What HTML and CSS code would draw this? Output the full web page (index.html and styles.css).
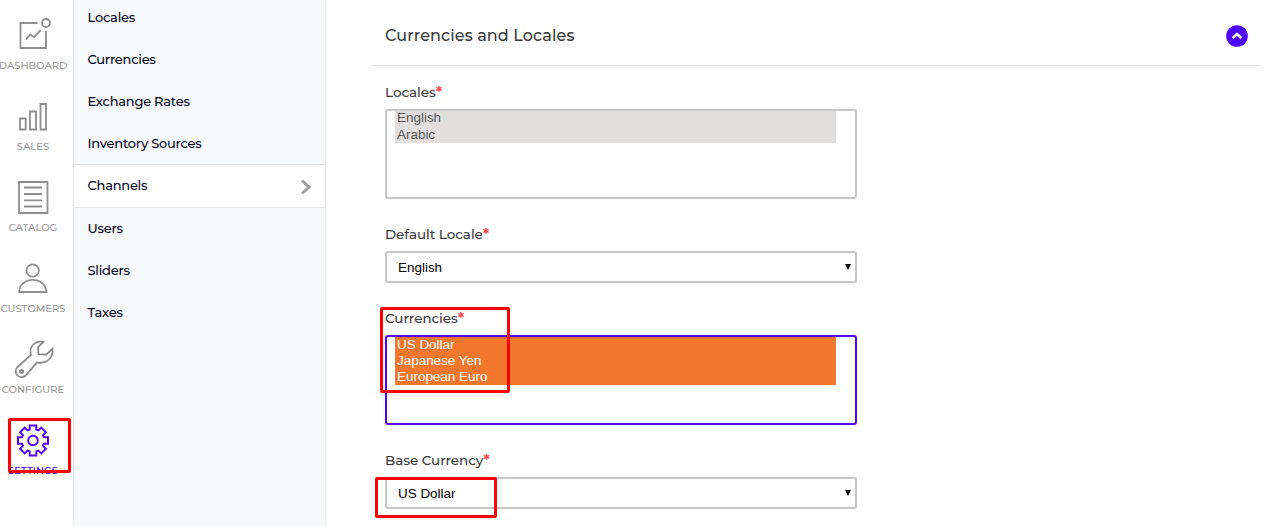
FILE: index.html
```
<!DOCTYPE html>
<html lang="en">
<head>
<meta charset="utf-8">
<title>Channels</title>
<link rel="stylesheet" href="styles.css">
</head>
<body>
<div class="app">
  <nav class="rail">
    <a class="rail-item"><svg class="icon" viewBox="0 0 40 40"><path d="M24.500 8H7.500V33H33V16M13 24.500l4.200-5 4 2.600 6.300-7"/><circle cx="33" cy="8" r="4"/></svg><span class="rail-label">DASHBOARD</span></a>
    <a class="rail-item"><svg class="icon" viewBox="0 0 40 40"><path d="M7 22.500h5.700v11H7zM17 15.500h6v18h-6zM27.500 8H33v25.500h-5.500z"/></svg><span class="rail-label">SALES</span></a>
    <a class="rail-item"><svg class="icon" viewBox="0 0 40 40"><path d="M6 5h28.500v31H6zM11 10.500h18M11 17h18M11 23.300h18M11 29.500h18"/></svg><span class="rail-label">CATALOG</span></a>
    <a class="rail-item"><svg class="icon" viewBox="0 0 40 40"><circle cx="19.700" cy="12.500" r="6.200"/><path d="M6.200 34C6.500 26.500 12 21.800 19.700 21.800S33 26.500 33.300 34z"/></svg><span class="rail-label">CUSTOMERS</span></a>
    <a class="rail-item"><svg class="icon" viewBox="0 0 40 40"><path d="M30.500 3C22 1 15.500 8 18 16L4.500 28a5.700 5.700 0 1 0 8.300 8.500L24 23.300C33 25.500 40.500 19 39.500 9.700L33.500 15.500 25.500 15.200 25 8z"/><circle cx="8.500" cy="32.500" r="1.700"/></svg><span class="rail-label">CONFIGURE</span></a>
    <a class="rail-item active"><svg class="icon" viewBox="-20 -20.500 40 40"><path d="M-3.300-11V-15H3.300V-11L5.400-10.100 8.300-12.900 12.900-8.300 10.100-5.400 11-3.300H15V3.300H11L10.100 5.400 12.900 8.300 8.300 12.900 5.400 10.100 3.300 11V15H-3.300V11L-5.400 10.100-8.300 12.900-12.900 8.300-10.100 5.400-11 3.300H-15V-3.300H-11L-10.100-5.400-12.900-8.300-8.300-12.900-5.400-10.100z"/><circle r="4.800"/></svg><span class="rail-label">SETTINGS</span></a>
  </nav>
  <aside class="menu">
    <a class="menu-item">Locales</a>
    <a class="menu-item">Currencies</a>
    <a class="menu-item">Exchange Rates</a>
    <a class="menu-item">Inventory Sources</a>
    <a class="menu-item current">Channels<svg class="chevron" viewBox="0 0 12 16"><path d="M2 1.500L9 8 2 14.500"/></svg></a>
    <a class="menu-item">Users</a>
    <a class="menu-item">Sliders</a>
    <a class="menu-item">Taxes</a>
  </aside>
  <main class="content">
    <header class="section-head">
      <h1 class="section-title">Currencies and Locales</h1>
      <svg class="collapse" viewBox="0 0 22 22"><circle cx="11" cy="11" r="10.800"/><path d="M7.300 12.500L11 9l3.700 3.500"/></svg>
    </header>
    <form class="fields">
      <div class="field">
        <label class="label">Locales<span class="required">*</span></label>
        <div class="listbox disabled"><div class="option">English</div><div class="option">Arabic</div></div>
      </div>
      <div class="field">
        <label class="label">Default Locale<span class="required">*</span></label>
        <div class="select">English<svg class="arrow" viewBox="0 0 6 6"><path d="M0 0h6L3 6z"/></svg></div>
      </div>
      <div class="field">
        <label class="label">Currencies<span class="required">*</span></label>
        <div class="listbox focused"><div class="option">US Dollar</div><div class="option">Japanese Yen</div><div class="option">European Euro</div></div>
      </div>
      <div class="field">
        <label class="label">Base Currency<span class="required">*</span></label>
        <div class="select">US Dollar<svg class="arrow" viewBox="0 0 6 6"><path d="M0 0h6L3 6z"/></svg></div>
      </div>
    </form>
  </main>
  <div class="marker marker-settings"></div>
  <div class="marker marker-currencies"></div>
  <div class="marker marker-base"></div>
</div>
</body>
</html>
```
FILE: styles.css
```
* { box-sizing: border-box; }
body { margin: 0; background: #fff; font-family: Montserrat, Inter, sans-serif; }
.app { position: relative; display: flex; width: 1266px; height: 526px; overflow: hidden; }

.rail { display: flex; flex-direction: column; gap: 21px; width: 74px; padding: 15px 7px 0 0; border-right: 1px solid #e8e8e8; flex-shrink: 0; }
.rail-item { display: flex; flex-direction: column; align-items: center; flex-shrink: 0; height: 60px; color: #979797; }
.icon { width: 40px; height: 40px; flex-shrink: 0; overflow: visible; fill: none; stroke: #8e8e8e; stroke-width: 1.8; }
.rail-label { padding-top: 1px; font-size: 10px; line-height: 20px; white-space: nowrap; font-weight: 500; }
.rail-item.active { color: #5500f5; }
.active .icon { stroke: #5500f5; stroke-width: 2; }

.menu { width: 252px; flex-shrink: 0; background: #f8f9fb; border-right: 1px solid #e8e8e8; margin-top: -4px; height: 530px; }
.menu-item { display: flex; justify-content: space-between; align-items: center; height: 42px; padding: 0 13px 0 13.5px; color: #070720; font-size: 13px; font-weight: 500; letter-spacing: -0.24px; }
.menu-item.current { height: 44px; margin-bottom: -1px; padding-bottom: 2px; background: #fff; border-top: 1px solid #e8e8e8; border-bottom: 1px solid #e8e8e8; }
.chevron { width: 12px; height: 16px; margin-top: 4px; fill: none; stroke: #a0a0a0; stroke-width: 3; }

.content { width: 890px; margin-left: 45px; flex-shrink: 0; }
.section-head { display: flex; align-items: center; justify-content: space-between; height: 66px; padding: 6px 13px 0 14px; border-bottom: 1px solid #e4e4e4; }
.section-title { margin: 0; color: #3a3a3a; font-size: 16px; line-height: 24px; font-weight: 500; letter-spacing: 0.1px; }
.collapse { width: 22px; height: 22px; fill: #4f00ff; }
.collapse path { fill: none; stroke: #fff; stroke-width: 2.5; stroke-linecap: round; }
.fields { display: flex; flex-direction: column; gap: 23px; padding: 14px 14px 0; }
.field { display: flex; flex-direction: column; gap: 5px; width: 472px; }
.label { height: 24px; color: #3a3a3a; font-size: 13.5px; line-height: 24px; font-weight: 500; letter-spacing: -0.05px; }
.required { color: #fc4c52; font-size: 15px; line-height: 20px; font-weight: 700; }
.listbox, .select { border: 2px solid #c7c7c7; border-radius: 3px; background: #fff; font: 13.45px "Liberation Sans", Arial, sans-serif; }
.listbox { height: 90px; padding: 0 19px 0 8px; }
.option { height: 16px; padding-left: 2px; line-height: 16px; background: #f4772e; color: #fff; }
.disabled .option { background: #e0dfde; color: #555; }
.disabled .option:first-child { line-height: 14px; }
.focused { border-color: #5500f5; }
.select { display: flex; align-items: center; justify-content: space-between; height: 32px; padding: 0 4px 0 11px; color: #000; }
.arrow { width: 6px; height: 6px; }

.marker { position: absolute; border: 3px solid #fd0004; border-radius: 2px; }
.marker-settings { left: 8px; top: 418px; width: 63px; height: 55px; }
.marker-currencies { left: 380px; top: 307px; width: 130px; height: 86px; }
.marker-base { left: 375px; top: 477px; width: 122px; height: 41px; }
```
